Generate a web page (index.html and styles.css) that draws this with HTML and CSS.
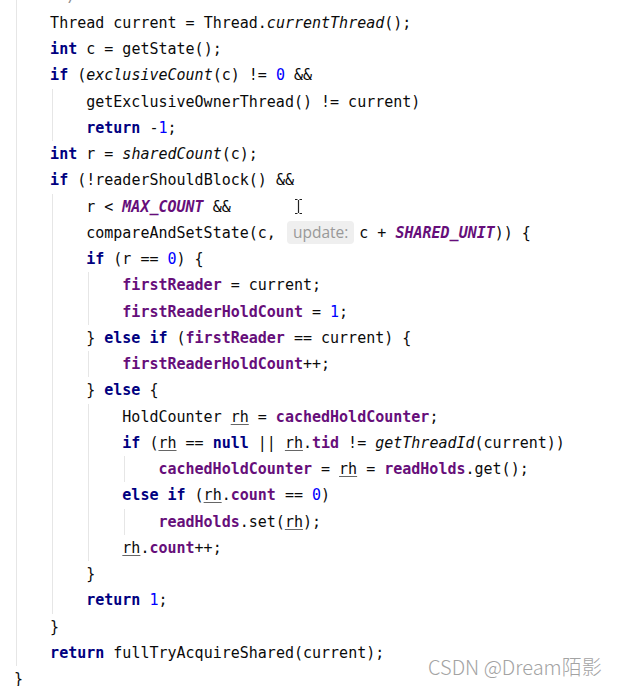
FILE: index.html
```html
<!DOCTYPE html>
<html>
<head>
<meta charset="utf-8">
<link rel="stylesheet" href="styles.css">
</head>
<body>
<div class="page">
<div class="editor">
<div class="ln"><span class="i g"></span><span class="cm"> */</span></div>
<div class="ln"><span class="i g"></span>Thread current = Thread.<span class="st">currentThread</span>();</div>
<div class="ln"><span class="i g"></span><span class="kw">int</span> c = getState();</div>
<div class="ln"><span class="i g"></span><span class="kw">if</span> (<span class="st">exclusiveCount</span>(c) != <span class="num">0</span> &amp;&amp;</div>
<div class="ln"><span class="i g"></span><span class="i g"></span>getExclusiveOwnerThread() != current)</div>
<div class="ln"><span class="i g"></span><span class="i g"></span><span class="kw">return</span> -<span class="num">1</span>;</div>
<div class="ln"><span class="i g"></span><span class="kw">int</span> r = <span class="st">sharedCount</span>(c);</div>
<div class="ln"><span class="i g"></span><span class="kw">if</span> (!readerShouldBlock() &amp;&amp;</div>
<div class="ln"><span class="i g"></span><span class="i g"></span>r &lt; <span class="cst">MAX_COUNT</span> &amp;&amp;<span class="caret"><svg width="9" height="17" viewBox="0 0 9 17"><path d="M1 1.5h2.5M5.5 1.5H8M4.5 2v13M1 15.5h2.5M5.5 15.5H8" stroke="#222" stroke-width="1.2" fill="none"/></svg></span></div>
<div class="ln"><span class="i g"></span><span class="i g"></span>compareAndSetState(c, <span class="hint">update:</span>c + <span class="cst">SHARED_UNIT</span>)) {</div>
<div class="ln"><span class="i g"></span><span class="i g"></span><span class="kw">if</span> (r == <span class="num">0</span>) {</div>
<div class="ln"><span class="i g"></span><span class="i g"></span><span class="i g"></span><span class="fd">firstReader</span> = current;</div>
<div class="ln"><span class="i g"></span><span class="i g"></span><span class="i g"></span><span class="fd">firstReaderHoldCount</span> = <span class="num">1</span>;</div>
<div class="ln"><span class="i g"></span><span class="i g"></span>} <span class="kw">else if</span> (<span class="fd">firstReader</span> == current) {</div>
<div class="ln"><span class="i g"></span><span class="i g"></span><span class="i g"></span><span class="fd">firstReaderHoldCount</span>++;</div>
<div class="ln"><span class="i g"></span><span class="i g"></span>} <span class="kw">else</span> {</div>
<div class="ln"><span class="i g"></span><span class="i g"></span><span class="i g"></span>HoldCounter <span class="u">rh</span> = <span class="fd">cachedHoldCounter</span>;</div>
<div class="ln"><span class="i g"></span><span class="i g"></span><span class="i g"></span><span class="kw">if</span> (<span class="u">rh</span> == <span class="kw">null</span> || <span class="u">rh</span>.<span class="fd">tid</span> != <span class="st">getThreadId</span>(current))</div>
<div class="ln"><span class="i g"></span><span class="i g"></span><span class="i g"></span><span class="i g"></span><span class="fd">cachedHoldCounter</span> = <span class="u">rh</span> = <span class="fd">readHolds</span>.get();</div>
<div class="ln"><span class="i g"></span><span class="i g"></span><span class="i g"></span><span class="kw">else if</span> (<span class="u">rh</span>.<span class="fd">count</span> == <span class="num">0</span>)</div>
<div class="ln"><span class="i g"></span><span class="i g"></span><span class="i g"></span><span class="i g"></span><span class="fd">readHolds</span>.set(<span class="u">rh</span>);</div>
<div class="ln"><span class="i g"></span><span class="i g"></span><span class="i g"></span><span class="u">rh</span>.<span class="fd">count</span>++;</div>
<div class="ln"><span class="i g"></span><span class="i g"></span>}</div>
<div class="ln"><span class="i g"></span><span class="i g"></span><span class="kw">return</span> <span class="num">1</span>;</div>
<div class="ln"><span class="i g"></span>}</div>
<div class="ln"><span class="i g"></span><span class="kw">return</span> fullTryAcquireShared(current);</div>
<div class="ln">}</div>
</div>
<div class="mark">CSDN @Dream陌影</div>
</div>
</body>
</html>
```
FILE: styles.css
```css
html, body {
  margin: 0;
  padding: 0;
  background: #ffffff;
}
.page {
  position: relative;
  width: 617px;
  height: 686px;
  overflow: hidden;
}
.editor {
  margin-top: -16.5px;
  padding-left: 14px;
  font-family: "DejaVu Sans Mono", "Liberation Mono", monospace;
  font-size: 15px;
  color: #0a0a0a;
}
.ln {
  height: 26.25px;
  line-height: 26.25px;
  white-space: pre;
}
.i {
  position: relative;
  display: inline-block;
  width: 4ch;
  height: 26.25px;
  vertical-align: top;
}
.g::before {
  content: "";
  position: absolute;
  left: 2px;
  top: 0;
  bottom: 0;
  width: 1px;
  background: #e6e6e6;
}
.cm { color: #8c8c8c; font-style: italic; }
.kw { color: #000080; font-weight: bold; }
.num { color: #0000ff; }
.st { font-style: italic; }
.fd { color: #660e7a; font-weight: bold; }
.cst { color: #660e7a; font-weight: bold; font-style: italic; }
.u {
  text-decoration: underline;
  text-decoration-color: #666;
  text-underline-offset: 2px;
}
.hint {
  display: inline-block;
  vertical-align: middle;
  font-family: "Open Sans", "Noto Sans", sans-serif;
  font-size: 15.5px;
  line-height: 23px;
  height: 23px;
  padding: 0 6px;
  margin: -2px 5px 0 2px;
  background: #efefef;
  color: #999999;
  border-radius: 4px;
}
.caret {
  position: relative;
  display: inline-block;
  width: 0;
  height: 26.25px;
  vertical-align: top;
}
.caret svg {
  position: absolute;
  left: 63px;
  top: 4px;
}
.mark {
  position: absolute;
  left: 428px;
  top: 653px;
  font-family: "Noto Sans CJK SC", "Noto Sans", sans-serif;
  font-size: 20px;
  line-height: 28px;
  color: #a3a3a3;
  font-weight: 300;
  text-shadow: 0 0 2px #ffffff;
  white-space: nowrap;
}
```
